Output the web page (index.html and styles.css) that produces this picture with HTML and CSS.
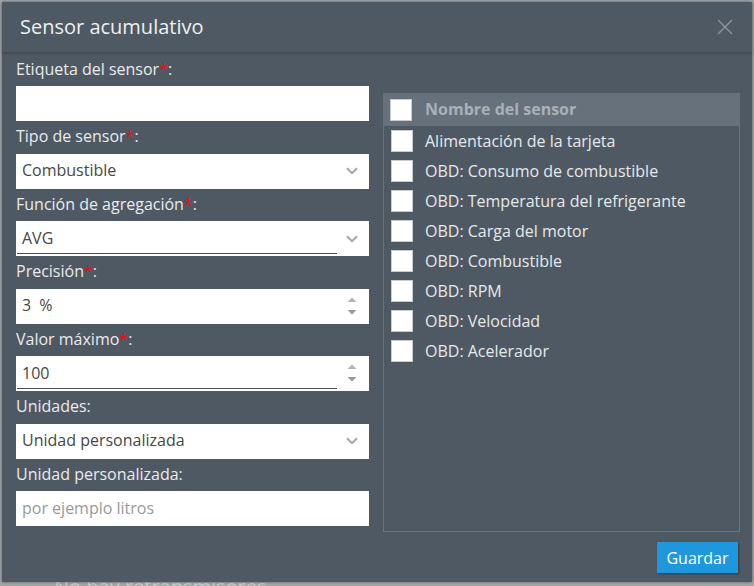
FILE: index.html
```html
<!DOCTYPE html>
<html lang="es">
<head>
<meta charset="utf-8">
<title>Sensor acumulativo</title>
<link rel="stylesheet" href="styles.css">
</head>
<body>
<div class="backdrop-text">No hay retransmisores</div>
<div class="modal">
  <div class="modal-header">
    <h1 class="modal-title">Sensor acumulativo</h1>
    <svg class="close" width="16" height="16" viewBox="0 0 16 16"><path d="M1 1L15 15M15 1L1 15" stroke="#8c959d" stroke-width="1.4" fill="none"/></svg>
  </div>
  <div class="modal-body">
    <div class="form">
      <div class="group">
        <div class="label">Etiqueta del sensor<span class="req">*</span>:</div>
        <div class="field"><span class="value"></span></div>
      </div>
      <div class="group">
        <div class="label">Tipo de sensor<span class="req">*</span>:</div>
        <div class="field"><span class="value">Combustible</span>
          <svg class="chev" width="12" height="8" viewBox="0 0 12 8"><path d="M1 1.2L6 6.2L11 1.2" stroke="#a3a7ab" stroke-width="2" fill="none"/></svg></div>
      </div>
      <div class="group">
        <div class="label">Función de agregación<span class="req">*</span>:</div>
        <div class="field underline"><span class="value">AVG</span>
          <svg class="chev" width="12" height="8" viewBox="0 0 12 8"><path d="M1 1.2L6 6.2L11 1.2" stroke="#a3a7ab" stroke-width="2" fill="none"/></svg></div>
      </div>
      <div class="group">
        <div class="label">Precisión<span class="req">*</span>:</div>
        <div class="field"><span class="value">3<span class="suffix">%</span></span>
          <svg class="spin" width="10" height="19" viewBox="0 0 10 19"><path d="M0.5 5L5 0.5L9.5 5Z" fill="#b5b5b5"/><path d="M0.5 13L5 17.5L9.5 13Z" fill="#9a9a9a"/></svg></div>
      </div>
      <div class="group">
        <div class="label">Valor máximo<span class="req">*</span>:</div>
        <div class="field underline"><span class="value">100</span>
          <svg class="spin" width="10" height="19" viewBox="0 0 10 19"><path d="M0.5 5L5 0.5L9.5 5Z" fill="#b5b5b5"/><path d="M0.5 13L5 17.5L9.5 13Z" fill="#9a9a9a"/></svg></div>
      </div>
      <div class="group">
        <div class="label">Unidades:</div>
        <div class="field"><span class="value">Unidad personalizada</span>
          <svg class="chev" width="12" height="8" viewBox="0 0 12 8"><path d="M1 1.2L6 6.2L11 1.2" stroke="#a3a7ab" stroke-width="2" fill="none"/></svg></div>
      </div>
      <div class="group">
        <div class="label">Unidad personalizada:</div>
        <div class="field"><span class="value placeholder">por ejemplo litros</span></div>
      </div>
    </div>
    <div class="panel">
      <div class="row head"><span class="box"></span><span class="row-text">Nombre del sensor</span></div>
      <div class="row"><span class="box"></span><span class="row-text">Alimentación de la tarjeta</span></div>
      <div class="row"><span class="box"></span><span class="row-text">OBD: Consumo de combustible</span></div>
      <div class="row"><span class="box"></span><span class="row-text">OBD: Temperatura del refrigerante</span></div>
      <div class="row"><span class="box"></span><span class="row-text">OBD: Carga del motor</span></div>
      <div class="row"><span class="box"></span><span class="row-text">OBD: Combustible</span></div>
      <div class="row"><span class="box"></span><span class="row-text">OBD: RPM</span></div>
      <div class="row"><span class="box"></span><span class="row-text">OBD: Velocidad</span></div>
      <div class="row"><span class="box"></span><span class="row-text">OBD: Acelerador</span></div>
    </div>
  </div>
  <div class="modal-footer">
    <button class="btn">Guardar</button>
  </div>
</div>
</body>
</html>
```
FILE: styles.css
```css
html, body {
  margin: 0;
  padding: 0;
}
body {
  width: 754px;
  height: 586px;
  overflow: hidden;
  background: #a3a7ab;
  font-family: "Open Sans", "Noto Sans", sans-serif;
  position: relative;
}
.backdrop-text {
  position: absolute;
  left: 54px;
  top: 573px;
  font-size: 20px;
  color: #c9ccd0;
}
.modal {
  position: relative;
  margin: 2px 0 0 2px;
  width: 750px;
  height: 580px;
  background: #4f5963;
  box-shadow: 0 0 3px rgba(0, 0, 0, 0.45);
  display: flex;
  flex-direction: column;
}
.modal-header {
  height: 50px;
  flex: 0 0 50px;
  display: flex;
  align-items: center;
  justify-content: space-between;
  padding: 0 19px 0 18px;
  border-bottom: 1px solid #444d56;
  box-shadow: 0 1px 2px rgba(0, 0, 0, 0.15);
}
.modal-title {
  margin: 0;
  font-size: 20px;
  font-weight: 400;
  color: #eef0f2;
  line-height: 26px;
}
.close {
  display: block;
}
.modal-body {
  flex: 1;
  display: flex;
  padding: 0 12px 0 14px;
  gap: 14px;
  min-height: 0;
}
.form {
  width: 353px;
  flex: 0 0 353px;
  padding-top: 0.5px;
}
.group {
  display: flex;
  flex-direction: column;
}
.label {
  padding-top: 5px;
  line-height: 20px;
  margin-bottom: 7.5px;
  font-size: 16px;
  color: #e9ebed;
}
.req {
  color: #e3101c;
}
.field {
  position: relative;
  height: 35px;
  background: #ffffff;
  display: flex;
  align-items: center;
  padding: 0 11px 2px 6px;
  box-sizing: border-box;
  font-size: 16px;
  color: #474747;
}
.field.underline::after {
  content: "";
  position: absolute;
  left: 1px;
  width: 320px;
  bottom: 2px;
  height: 1px;
  background: #4a4f55;
}
.value {
  flex: 1;
  white-space: nowrap;
  line-height: 20px;
}
.placeholder {
  color: #9a9a9a;
}
.suffix {
  margin-left: 8px;
}
.chev {
  display: block;
  margin-top: 2px;
}
.spin {
  display: block;
  margin: 2px 1px 0 0;
}
.panel {
  margin-top: 40px;
  width: 357px;
  height: 439px;
  box-sizing: border-box;
  border: 1px solid #69747e;
}
.row {
  height: 30px;
  display: flex;
  align-items: center;
  padding-left: 7px;
}
.row.head {
  height: 33px;
  margin: -1px -1px 0;
  padding-left: 7px;
  background: #66717c;
}
.row.head .box {
  margin-top: 1px;
}
.box {
  width: 22px;
  height: 22px;
  box-sizing: border-box;
  background: #ffffff;
  border: 1px solid #c8ccd0;
  flex: 0 0 22px;
}
.row-text {
  margin-left: 12px;
  font-size: 16px;
  line-height: 20px;
  color: #e6e9ec;
  white-space: nowrap;
}
.row.head .row-text {
  margin: 0 0 2px 13px;
  font-weight: 700;
  color: #a8b0b8;
}
.modal-footer {
  flex: 0 0 auto;
  display: flex;
  justify-content: flex-end;
  padding: 10px 14px 9px;
}
.btn {
  width: 81px;
  height: 31px;
  border: none;
  background: #1e97dd;
  color: #ffffff;
  font-family: "Open Sans", "Noto Sans", sans-serif;
  font-size: 16px;
  padding: 0;
  box-shadow: 1px 1px 2px rgba(0, 0, 0, 0.3);
}
```
